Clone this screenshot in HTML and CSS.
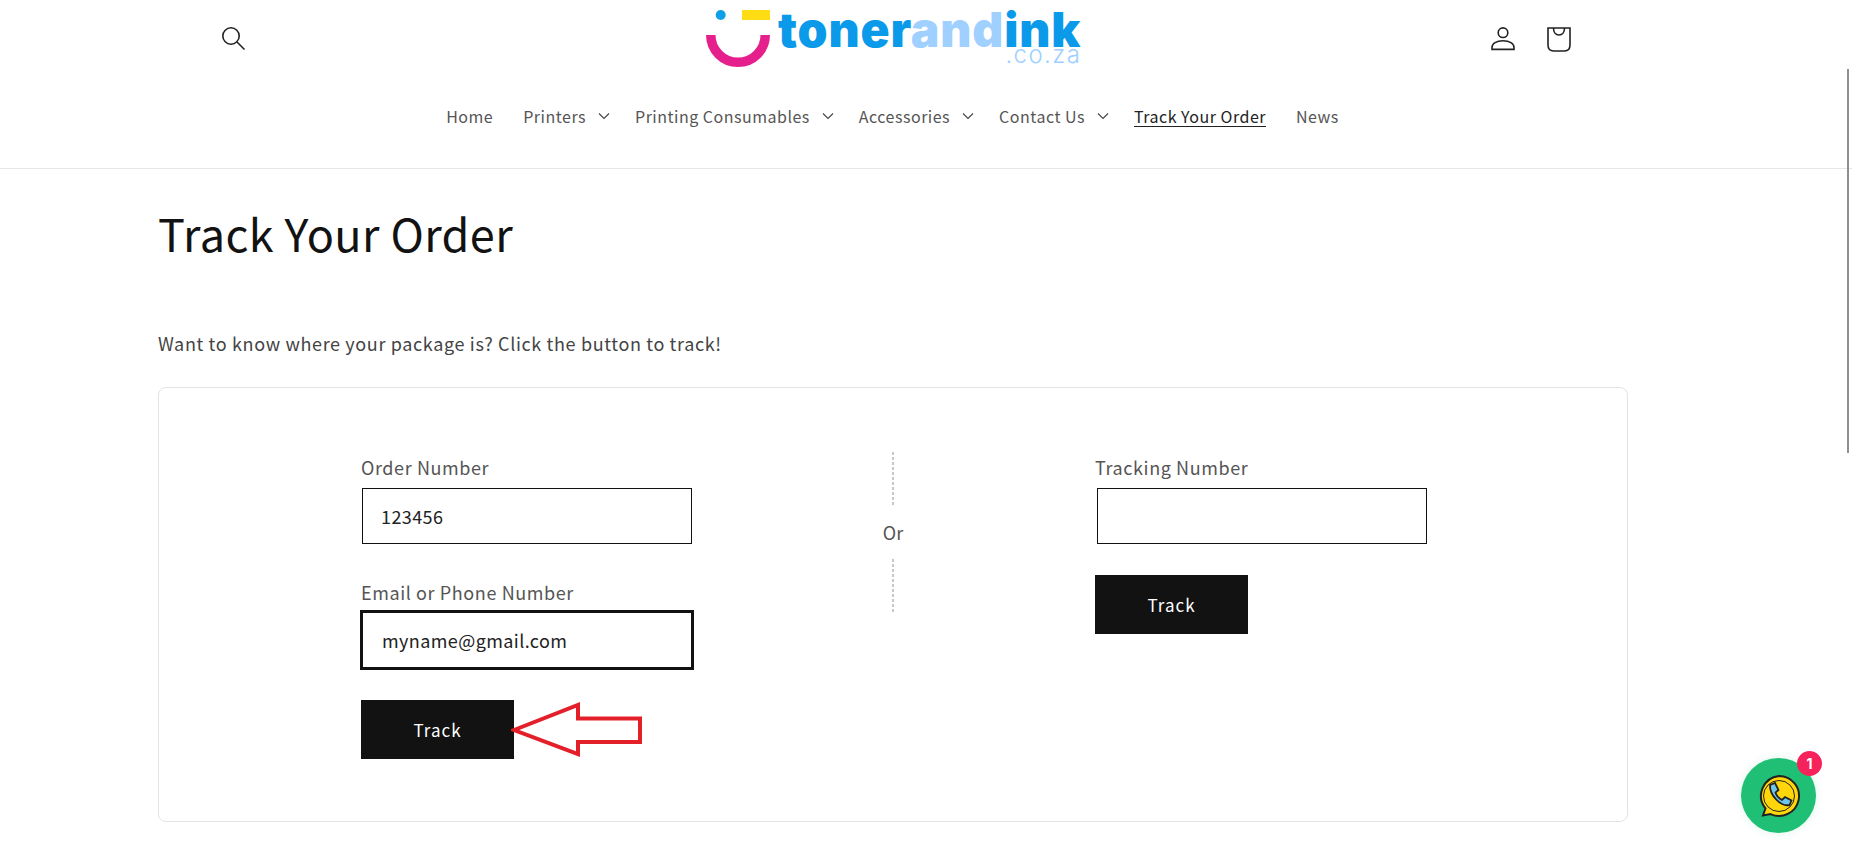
FILE: index.html
```html
<!DOCTYPE html>
<html lang="en">
<head>
  <meta charset="UTF-8">
  <meta name="viewport" content="width=device-width, initial-scale=1.0">
  <title>Track Your Order</title>
  <link rel="stylesheet" href="styles.css">
</head>
<body>
  <header class="site-header">
    <div class="header-top">
      <a class="icon-link search-link" href="#" aria-label="Search">
        <svg width="28" height="28" viewBox="0 0 28 28" fill="none" stroke="#222" stroke-width="1.6"><circle cx="12" cy="12" r="8.2"/><path d="M18 18l7.5 7.5"/></svg>
      </a>
      <a class="logo" href="#">
        <svg class="logo-mark" width="64" height="58" viewBox="0 0 64 58">
          <circle cx="14.700" cy="5" r="5" fill="#0f9fe8"/>
          <rect x="36" y="0" width="28" height="10" fill="#ffdc14"/>
          <path d="M4.750 25a27.250 27.250 0 0 0 54.500 0" fill="none" stroke="#e5208c" stroke-width="9.500"/>
        </svg>
        <span class="logo-text">
          <span class="logo-name">toner<em>and</em>ink</span>
          <span class="logo-tld">.co.za</span>
        </span>
      </a>
      <div class="header-icons">
        <a class="icon-link" href="#" aria-label="Account">
          <svg width="24" height="24" viewBox="0 0 24 24" fill="none" stroke="#222" stroke-width="1.600"><circle cx="12" cy="5.700" r="4.800"/><path d="M1 22.400v-2c0-4 4.500-6.600 11-6.600s11 2.600 11 6.600v2z"/></svg>
        </a>
        <a class="icon-link" href="#" aria-label="Cart">
          <svg width="24" height="25" viewBox="0 0 24 25" fill="none" stroke="#222" stroke-width="1.600"><path d="M1 1h22v17c0 4-2 6-5.500 6h-11c-3.500 0-5.500-2-5.500-6z"/><path d="M6.500 1c0 4 2 7 5.500 7s5.500-3 5.500-7"/></svg>
        </a>
      </div>
    </div>
    <nav class="main-nav">
      <a href="#">Home</a>
      <a class="has-menu" href="#">Printers <svg class="caret" viewBox="0 0 12 8"><path d="M1 1.500l5 5 5-5"/></svg></a>
      <a class="has-menu" href="#">Printing Consumables <svg class="caret" viewBox="0 0 12 8"><path d="M1 1.500l5 5 5-5"/></svg></a>
      <a class="has-menu" href="#">Accessories <svg class="caret" viewBox="0 0 12 8"><path d="M1 1.500l5 5 5-5"/></svg></a>
      <a class="has-menu" href="#">Contact Us <svg class="caret" viewBox="0 0 12 8"><path d="M1 1.500l5 5 5-5"/></svg></a>
      <a class="current" href="#">Track Your Order</a>
      <a href="#">News</a>
    </nav>
  </header>

  <main class="page">
    <h1>Track Your Order</h1>
    <p class="intro">Want to know where your package is? Click the button to track!</p>

    <section class="track-card">
      <form class="track-form">
        <div class="form-group">
          <label for="order">Order Number</label>
          <input id="order" type="text" value="123456">
        </div>
        <div class="form-group">
          <label for="contact">Email or Phone Number</label>
          <input id="contact" class="focused" type="text" value="myname@gmail.com">
        </div>
        <div class="button-row">
          <button type="button">Track</button>
          <svg class="arrow" width="132" height="58" viewBox="0 0 132 58" fill="#fff" stroke="#e3202a" stroke-width="4"><path d="M3 29L67 4v13.500h62V41H67v12z"/></svg>
        </div>
      </form>

      <div class="divider">
        <span class="dash"></span>
        <span>Or</span>
        <span class="dash"></span>
      </div>

      <form class="track-form tracking-form">
        <div class="form-group">
          <label for="tracking">Tracking Number</label>
          <input id="tracking" type="text">
        </div>
        <div class="button-row">
          <button type="button">Track</button>
        </div>
      </form>
    </section>
  </main>

  <a class="chat-bubble" href="#" aria-label="WhatsApp">
    <svg width="44" height="44" viewBox="0 0 44 44">
      <path d="M22 2a20 20 0 1 1-8.500 38.100L6 41.500l2.500-7A20 20 0 0 1 22 2z" fill="#ffd60a" stroke="#222" stroke-width="2"/>
      <circle cx="22" cy="22" r="15.500" fill="none" stroke="#222" stroke-width="1"/>
      <path d="M13 11l5-2 3.500 7-3 2.500c1 3.500 3.500 6 6.500 7.500l3-3 6.500 3.500-2 4.500c-9 2-20-10-19.500-20z" fill="#6fc5ec" stroke="#222" stroke-width="1.800"/>
    </svg>
    <span class="chat-count">1</span>
  </a>

  <div class="scroll-thumb"></div>
</body>
</html>
```

FILE: styles.css
```css
* {
  box-sizing: border-box;
}
html, body {
  height: 850px;
  overflow: hidden;
}
body {
  margin: 0;
  background: #fff;
  color: #121212;
  font-family: "Noto Sans CJK SC", "Noto Sans", sans-serif;
  font-size: 17px;
}
a {
  color: inherit;
  text-decoration: none;
}
.site-header {
  border-bottom: 1px solid #e7e7e7;
  height: 169px;
}
.header-top {
  display: flex;
  align-items: flex-start;
  height: 92px;
  padding: 0 281px 0 219px;
}
.icon-link {
  display: block;
  margin-top: 27px;
}
.search-link {
  width: 487px;
  margin-top: 24px;
}
.logo {
  display: flex;
  gap: 8px;
  margin-top: 10px;
}
.logo-mark {
  display: block;
}
.logo-text {
  display: flex;
  flex-direction: column;
  align-items: flex-end;
  margin-top: -2px;
}
.logo-name {
  font-family: "Inter", sans-serif;
  font-weight: 900;
  font-size: 48px;
  line-height: 44px;
  letter-spacing: 0.85px;
  color: #0a9ae9;
}
.logo-name em {
  font-style: normal;
  color: #9fd0ff;
}
.logo-tld {
  margin-top: -4px;
  font-family: "Inter", sans-serif;
  font-weight: 300;
  font-size: 24px;
  line-height: 14px;
  letter-spacing: 1.4px;
  color: #9fd0ff;
}
.header-icons {
  display: flex;
  gap: 32px;
  margin-left: auto;
}
.main-nav {
  display: flex;
  justify-content: center;
  align-items: center;
  gap: 30px;
  padding: 12px 67px 0 0;
  font-size: 16px;
  letter-spacing: 0.5px;
  color: #555;
}
.main-nav .has-menu {
  display: flex;
  align-items: center;
  gap: 12px;
  margin-right: -5px;
}
.main-nav .current {
  color: #222;
  border-bottom: 1px solid #222;
  line-height: 20px;
}
.caret {
  width: 12px;
  height: 8px;
  fill: none;
  stroke: #444;
  stroke-width: 1.100;
}
.page {
  padding: 0 224px 0 158px;
}
h1 {
  margin: 30px 0 0;
  font-size: 45px;
  font-weight: 400;
  line-height: 68px;
  letter-spacing: 0.4px;
}
.intro {
  margin: 63px 0 0;
  font-size: 18px;
  line-height: 26px;
  letter-spacing: 0.64px;
  color: #444;
}
.track-card {
  display: flex;
  justify-content: space-between;
  align-items: flex-start;
  margin-top: 31px;
  height: 435px;
  width: 1470px;
  padding: 66px 200px 0 202px;
  border: 1px solid #e3e3e3;
  border-radius: 8px;
}
.track-form {
  width: 332px;
}
.form-group + .form-group {
  margin-top: 35px;
}
label {
  display: block;
  margin-bottom: 8px;
  font-size: 18px;
  line-height: 26px;
  letter-spacing: 0.6px;
  color: #555;
}
input {
  display: block;
  width: 330px;
  height: 56px;
  margin-left: 1px;
  padding: 0 18px;
  border: 1px solid #121212;
  border-radius: 0;
  outline: none;
  background: #fff;
  font: inherit;
  font-size: 18px;
  color: #222;
  letter-spacing: 0.4px;
}
input.focused {
  width: 334px;
  height: 60px;
  margin: -3px 0 -1px -1px;
  padding: 0 19px;
  border: 3px solid #121212;
}
.tracking-form input {
  margin-left: 2px;
}
.button-row {
  display: flex;
  align-items: center;
  margin-top: 31px;
}
button {
  width: 153px;
  height: 59px;
  border: none;
  background: #121212;
  color: #fff;
  font: inherit;
  font-size: 17px;
  letter-spacing: 1px;
  cursor: pointer;
}
.arrow {
  margin-left: -3px;
}
.divider {
  display: flex;
  flex-direction: column;
  align-items: center;
  gap: 14px;
  height: 160px;
  margin: -2px 2px 0 0;
  color: #555;
  font-size: 18px;
  line-height: 26px;
}
.dash {
  flex: 1;
  width: 2px;
  background: repeating-linear-gradient(#c8c8c8 0 3px, transparent 3px 5px);
}
.chat-bubble {
  position: fixed;
  left: 1741px;
  top: 758px;
  width: 75px;
  height: 75px;
  border-radius: 50%;
  background: #1fbf75;
  display: flex;
  align-items: center;
  justify-content: center;
  box-shadow: 0 0 10px rgba(31, 191, 117, 0.15);
}
.chat-count {
  position: absolute;
  top: -7px;
  right: -6px;
  width: 25px;
  height: 25px;
  border-radius: 50%;
  background: #f5225c;
  color: #fff;
  font-family: "Inter", sans-serif;
  font-size: 14px;
  font-weight: 700;
  line-height: 25px;
  text-align: center;
}
.scroll-thumb {
  position: fixed;
  top: 69px;
  right: 3px;
  width: 2px;
  height: 384px;
  background: #8f8f8f;
}
```
